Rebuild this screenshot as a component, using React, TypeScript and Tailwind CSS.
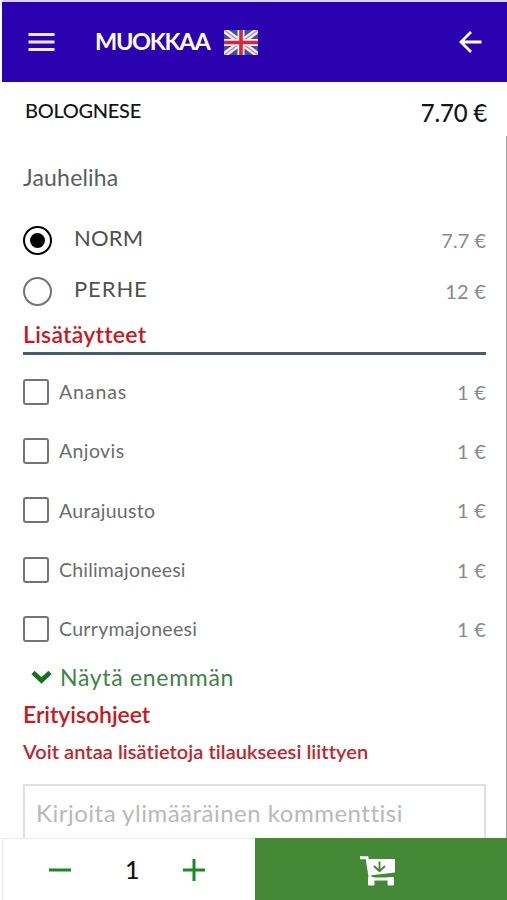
import React from 'react'

const toppings = [
  { name: 'Ananas', style: 'tracking-[0.9px]' },
  { name: 'Anjovis', style: 'tracking-[0.4px]' },
  { name: 'Aurajuusto', style: 'tracking-[0.3px]' },
  { name: 'Chilimajoneesi', style: 'tracking-[0.2px]' },
  { name: 'Currymajoneesi', style: 'tracking-[0.3px]' },
]

function Flag() {
  return (
    <svg className="h-[25px] w-[34px]" viewBox="0 0 34 25">
      <rect width="34" height="25" fill="#34579c" />
      <path d="M0 0L34 25M34 0L0 25" stroke="#f3e9ee" strokeWidth="5.6" />
      <path d="M0 0L34 25M34 0L0 25" stroke="#d98698" strokeWidth="1.4" />
      <path d="M17 0V25M0 12.5H34" stroke="#f7edf0" strokeWidth="7" />
      <path d="M17 0V25M0 12.5H34" stroke="#d3283c" strokeWidth="3.6" />
    </svg>
  )
}

function CartIcon() {
  return (
    <svg className="h-[32px] w-[38px]" viewBox="0 0 38 32">
      <path d="M1 2.7H8L12 27.5M11 24H34" fill="none" stroke="#fff" strokeWidth="3" />
      <path d="M8 4H36V17.5L10.5 20.5Z" fill="#fff" />
      <path d="M20.5 6.5V16M15 11L20.5 16.2L26 11" fill="none" stroke="#438936" strokeWidth="1.9" />
      <path d="M9.5 22.5H15V30H9.5ZM29 22.5H34.5V30H29Z" fill="#fff" stroke="#fff" strokeLinejoin="round" />
    </svg>
  )
}

function Header() {
  return (
    <header className="ml-[2px] flex h-[82px] items-center border-t-2 border-[#d9d3f3] bg-[#2a02b0] pr-[25px] pl-[26px] text-white">
      <svg className="h-[20px] w-[27px]" viewBox="0 0 27 20">
        <path d="M0.5 2.5H26.5M0.5 10H26.5M0.5 17.5H26.5" stroke="#eee9ff" strokeWidth="3" />
      </svg>
      <h1 className="ml-[40px] w-[129px] text-[23.5px] font-bold tracking-[-1.3px] whitespace-nowrap">MUOKKAA</h1>
      <Flag />
      <svg className="ml-auto h-[22px] w-[23px]" viewBox="0 0 23 22" fill="none" stroke="#fff" strokeWidth="2.8">
        <path d="M22.5 11H2M12 1L2 11L12 21" />
      </svg>
    </header>
  )
}

export default function App() {
  return (
    <div className="flex h-[900px] w-[507px] flex-col overflow-hidden bg-white font-['Lato',sans-serif]">
      <Header />
      <div className="flex h-[54px] shrink-0 items-center justify-between pt-[8px] pr-[20px] pl-[25px] text-[#151515]">
        <h2 className="-mt-[6px] text-[20px] font-medium tracking-[-0.3px]">BOLOGNESE</h2>
        <span className="text-[24px] font-medium tracking-[-0.2px]">7.70 €</span>
      </div>

      <main className="h-[702px] overflow-hidden border-r border-[#a0a0a0] pr-[20px] pl-[23px]">
        <p className="flex h-[79px] items-center pt-[3px] text-[23px] tracking-[0.2px] text-[#5c5c5c]">Jauheliha</p>
        <div className="flex h-[51px] items-center">
          <span className="flex size-[29px] items-center justify-center rounded-full border-[2.5px] border-black">
            <span className="size-[15px] rounded-full bg-black" />
          </span>
          <span className="ml-[22px] pb-[7px] text-[22px] tracking-[0.2px] text-[#505050]">NORM</span>
          <span className="ml-auto pb-px text-[20px] text-[#8a8a8a]">7.7 €</span>
        </div>
        <div className="flex h-[51px] items-center">
          <span className="size-[29px] rounded-full border-2 border-[#747474]" />
          <span className="ml-[22px] pb-[6px] text-[22px] tracking-[0.9px] text-[#505050]">PERHE</span>
          <span className="ml-auto pb-px text-[20px] tracking-[0.2px] text-[#8a8a8a]">12 €</span>
        </div>
        <h3 className="flex h-[38px] items-center border-b-[3px] border-[#455d6b] text-[23px] font-semibold tracking-[0.27px] text-[#cb1720]">
          Lisätäytteet
        </h3>
        <div className="pt-[7px]">
          {toppings.map((t) => (
            <div key={t.name} className="flex h-[59.3px] items-center">
              <span className="size-[26px] rounded-[3px] border-2 border-[#747474]" />
              <span className={`ml-[10px] text-[19.5px] text-[#6c6c6c] ${t.style}`}>{t.name}</span>
              <span className="ml-auto text-[20px] tracking-[0.2px] text-[#8a8a8a]">1 €</span>
            </div>
          ))}
        </div>
        <div className="flex h-[37px] items-center pl-[8px]">
          <svg className="h-[14px] w-[21px]" viewBox="0 0 21 14">
            <path d="M2 2.5L10.5 10.5L19 2.5" fill="none" stroke="#16711d" strokeWidth="4.6" />
          </svg>
          <span className="ml-[8px] text-[23px] tracking-[0.7px] text-[#3d8446]">Näytä enemmän</span>
        </div>
        <h3 className="flex h-[37px] items-center text-[23px] font-semibold tracking-[-0.05px] text-[#cb1720]">Erityisohjeet</h3>
        <p className="flex h-[37px] items-center text-[20px] font-semibold tracking-[0.05px] text-[#c4232a]">
          Voit antaa lisätietoja tilaukseesi liittyen
        </p>
        <div className="mt-[15px] h-[90px] border-2 border-[#e0e0e0] px-[11px] pt-[13px] text-[24px] leading-[28px] tracking-[0.5px] whitespace-nowrap text-[#b9b9b9]">
          Kirjoita ylimääräinen kommenttisi
        </div>
      </main>

      <footer className="ml-[2px] flex h-[62px] shrink-0">
        <div className="flex w-[253px] items-center border-t border-l border-[#ececec] pl-[45px]">
          <svg className="h-[24px] w-[24px]" viewBox="0 0 24 24">
            <path d="M1 12H23" stroke="#188a20" strokeWidth="3" />
          </svg>
          <span className="ml-[53px] w-[16px] pt-px text-[25px] font-medium text-[#111]">1</span>
          <svg className="ml-[41px] h-[24px] w-[24px]" viewBox="0 0 24 24">
            <path d="M1 12H23M12 1V23" stroke="#188a20" strokeWidth="3" />
          </svg>
        </div>
        <button className="flex flex-1 items-center justify-center bg-[#438936] pt-[4px] pr-[6px]">
          <CartIcon />
        </button>
      </footer>
    </div>
  )
}
